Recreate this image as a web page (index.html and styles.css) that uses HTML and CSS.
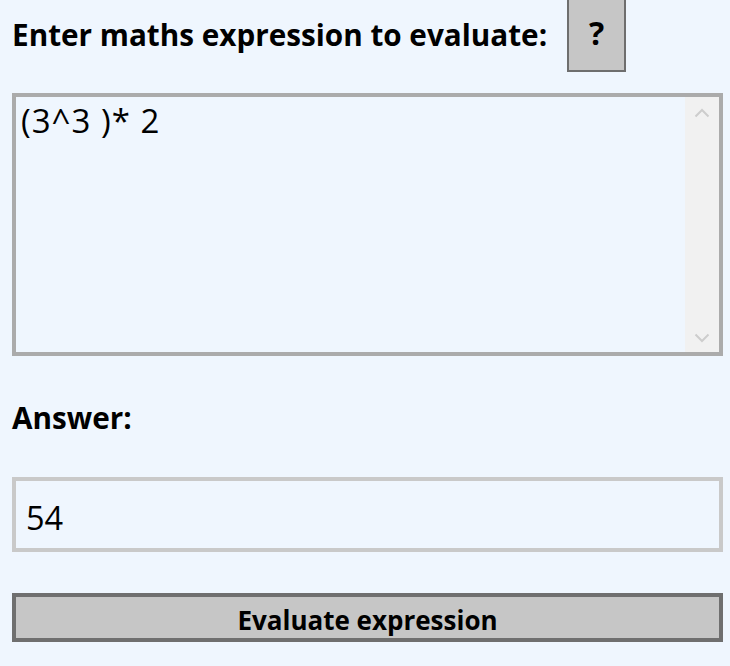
FILE: index.html
```html
<!DOCTYPE html>
<html lang="en">
<head>
<meta charset="utf-8">
<title>Maths expression evaluator</title>
<link rel="stylesheet" href="styles.css">
</head>
<body>
<main class="app">
  <div class="header">
    <label class="title" for="expr">Enter maths expression to evaluate:</label>
    <button class="help" type="button">?</button>
  </div>
  <div class="editor">
    <textarea id="expr" class="expr" spellcheck="false">(3^3 )* 2</textarea>
    <div class="scrollbar">
      <svg class="chev" width="16" height="10" viewBox="0 0 16 10"><path d="M1.5 8.5 L8 2 L14.5 8.5" fill="none" stroke="#cdcdcd" stroke-width="2"/></svg>
      <svg class="chev" width="16" height="10" viewBox="0 0 16 10"><path d="M1.5 1.5 L8 8 L14.5 1.5" fill="none" stroke="#cdcdcd" stroke-width="2"/></svg>
    </div>
  </div>
  <div class="answer-label">Answer:</div>
  <input class="answer" type="text" value="54" readonly>
  <button class="evaluate" type="button">Evaluate expression</button>
</main>
</body>
</html>
```

FILE: styles.css
```css
html, body {
  margin: 0;
  padding: 0;
  background: #eff6fe;
}

body {
  font-family: "Open Sans", "Noto Sans", sans-serif;
  color: #000;
}

.app {
  display: flex;
  flex-direction: column;
  padding: 0 7px 0 12px;
}

.header {
  display: flex;
  align-items: center;
  gap: 20px;
  height: 72px;
}

.title {
  font-size: 29.7px;
  font-weight: 700;
  line-height: 1;
  margin-top: -3px;
}

.help {
  align-self: flex-end;
  width: 59px;
  height: 76px;
  margin-top: -4px;
  background: #c6c6c6;
  border: 2px solid #6e6e6e;
  font-family: inherit;
  font-size: 32px;
  font-weight: 700;
  line-height: 1;
  padding: 0 0 2px;
  color: #000;
}

.editor {
  display: flex;
  margin-top: 21px;
  height: 263px;
  box-sizing: border-box;
  border: 4px solid #ababab;
  background: #eff6fe;
}

.expr {
  flex: 1;
  border: none;
  outline: none;
  resize: none;
  overflow: hidden;
  background: transparent;
  font-family: inherit;
  font-size: 33px;
  letter-spacing: 1px;
  line-height: 40px;
  padding: 4px 4px 4px 5px;
  margin: 0;
  color: #000;
}

.scrollbar {
  width: 34px;
  background: #f1f1f1;
  display: flex;
  flex-direction: column;
  justify-content: space-between;
  align-items: center;
  padding: 11px 0 9px;
}

.answer-label {
  margin-top: 42px;
  font-size: 29.7px;
  font-weight: 700;
  line-height: 40px;
}

.answer {
  margin-top: 39px;
  height: 75px;
  box-sizing: border-box;
  border: 4px solid #c9c9c9;
  background: #eff6fe;
  font-family: inherit;
  font-size: 32.5px;
  padding: 5px 10px 0;
  outline: none;
  color: #000;
}

.evaluate {
  margin-top: 41px;
  height: 49px;
  box-sizing: border-box;
  border: 4px solid #6f6f6f;
  background: #c6c6c6;
  font-family: inherit;
  font-size: 26px;
  font-weight: 700;
  line-height: 1;
  padding: 4px 0 0;
  color: #000;
}
```
